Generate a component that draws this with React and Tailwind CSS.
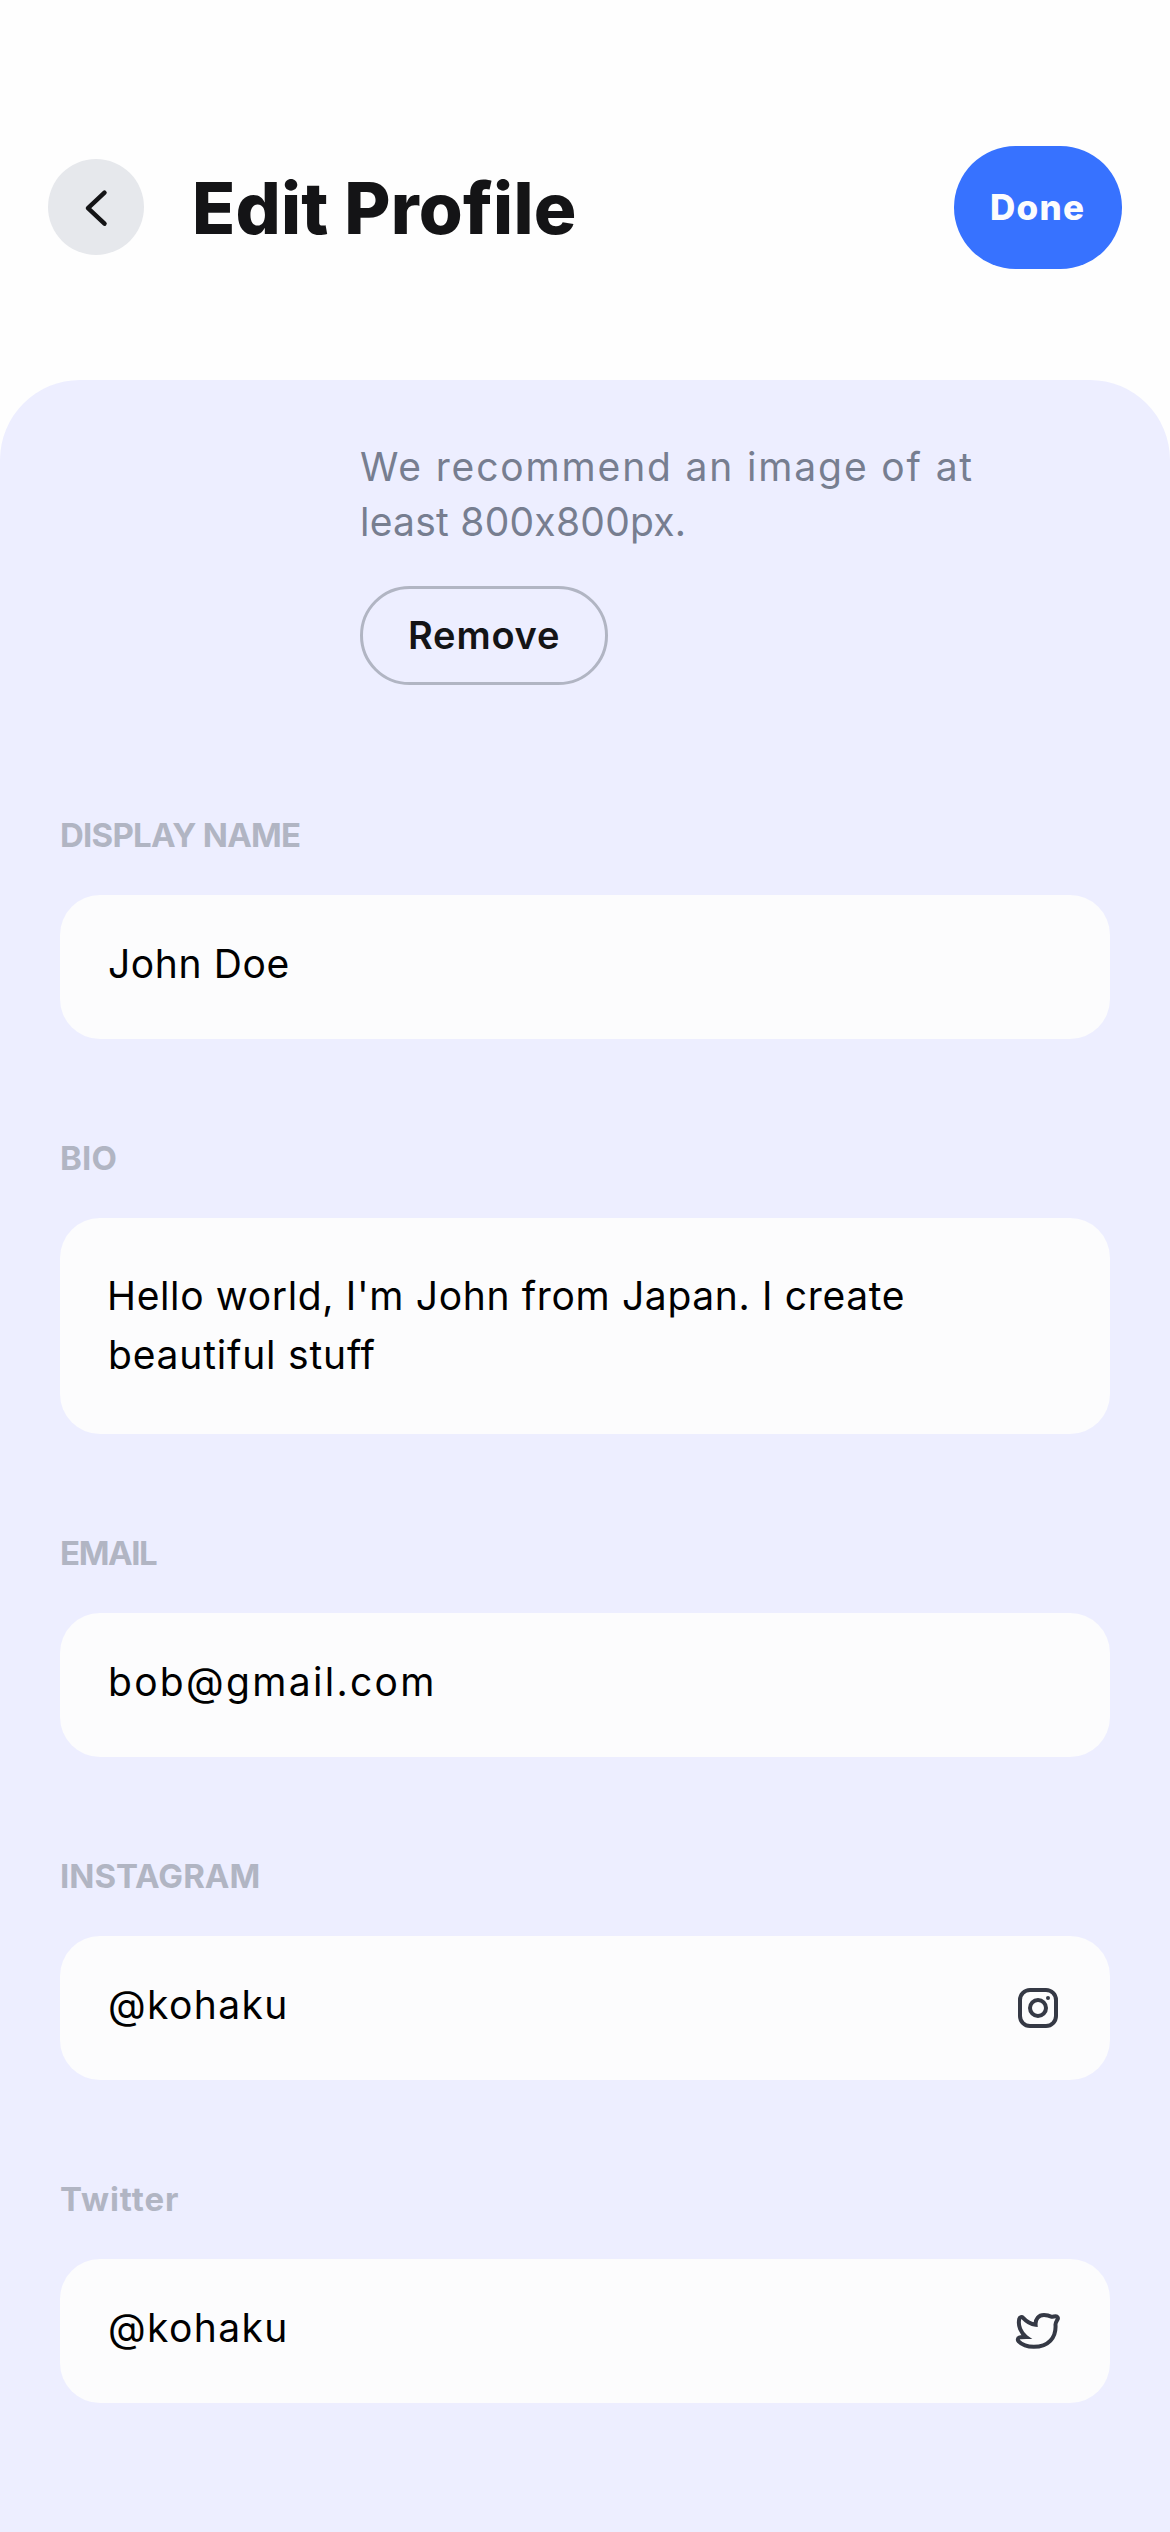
function InstagramIcon() {
  return (
    <svg className="size-12 shrink-0" viewBox="0 0 48 48" fill="none">
      <rect x="6" y="6" width="36" height="36" rx="10" stroke="#353945" strokeWidth="4" />
      <circle cx="24" cy="24" r="8" stroke="#353945" strokeWidth="4" />
      <circle cx="34" cy="14" r="2" fill="#353945" />
    </svg>
  );
}

function TwitterIcon() {
  return (
    <svg className="size-12 shrink-0" viewBox="0 0 48 48" fill="none">
      <path
        d="M21.6 17.8C21.2 12 24.6 8 30 8C33 8 35.2 8.6 37.5 9.8C38.9 9.9 40.3 9.3 41.8 9.3C43.4 9.3 44.4 10.8 43.6 12.3C42.7 14 41.3 15.6 41.5 17.8C42.3 30.5 34.5 39.8 19.8 39.8C13 39.8 8 37.9 4.6 34.4C3 32.7 4.2 30.3 6.3 30.2C8.2 30.1 10 30 12.2 30C7 26.2 3.6 18.8 5.3 11.8C5.8 10 7.8 9.5 9.1 10.9C12.3 14.4 16.4 17.2 21.6 17.8Z"
        stroke="#353945"
        strokeWidth="4"
      />
    </svg>
  );
}

function Field({ label, labelClass, children }) {
  return (
    <div className="flex flex-col gap-9">
      <label className={`text-[33px] leading-[48px] font-bold text-[#b1b5c3] ${labelClass}`}>{label}</label>
      {children}
    </div>
  );
}

function Input({ value, className, icon }) {
  return (
    <div className="flex h-36 items-center justify-between rounded-[40px] bg-[#fcfcfd] px-12">
      <span className={`pb-1.5 text-[39px] leading-[58px] text-black ${className}`}>{value}</span>
      {icon}
    </div>
  );
}

export default function App() {
  return (
    <div className="flex h-[2532px] w-[1170px] flex-col overflow-hidden bg-[#fefefe] font-['Inter',sans-serif] whitespace-nowrap [font-feature-settings:'calt'_0]">
      <header className="flex h-[380px] shrink-0 items-start px-12 pt-[146px]">
        <div className="flex h-[123px] w-full items-center">
          <button className="mb-px flex size-24 items-center justify-center rounded-full bg-[#e6e8ec]">
            <svg className="size-12" viewBox="0 0 48 48" fill="none">
              <path d="M32.5 9.7L16 25.1L32.5 40.6" stroke="#141416" strokeWidth="4.5" strokeLinecap="round" strokeLinejoin="round" />
            </svg>
          </button>
          <h1 className="ml-12 text-[71px] leading-[96px] font-extrabold tracking-[0.2px] text-[#141416]">Edit Profile</h1>
          <button className="ml-auto flex h-[123px] w-[168px] items-center rounded-full bg-[#3772ff] pl-9 text-[35px] font-extrabold tracking-[1.3px] text-[#fcfcfd]">
            Done
          </button>
        </div>
      </header>

      <main className="flex-1 rounded-t-[80px] bg-[#edeeff] px-[60px] pt-[59px]">
        <section className="ml-[300px]">
          <p className="text-[39px] leading-[55px] text-[#777e90]">
            <span className="block tracking-[1.85px]">We recommend an image of at</span>
            <span className="block tracking-[0.25px]">least 800x800px.</span>
          </p>
          <button className="mt-[37px] flex h-[99px] w-[248px] items-center rounded-full border-[3px] border-[#b1b5c3] pl-[45px] text-[38px] font-semibold tracking-[0.8px] text-[#141416]">
            Remove
          </button>
        </section>

        <form className="mt-[126px] flex flex-col gap-[95px]">
          <Field label="DISPLAY NAME" labelClass="tracking-[-0.75px]">
            <Input value="John Doe" className="tracking-[0.6px]" />
          </Field>
          <Field label="BIO" labelClass="tracking-[0.2px]">
            <div className="h-[216px] rounded-[40px] bg-[#fcfcfd] px-12 pt-12 text-[39px] leading-[59px] text-black">
              <span className="-ml-px block tracking-[0.65px]">Hello world, I'm John from Japan. I create</span>
              <span className="block tracking-[0.8px]">beautiful stuff</span>
            </div>
          </Field>
          <Field label="EMAIL" labelClass="tracking-[-1.4px]">
            <Input value="bob@gmail.com" className="tracking-[2.3px]" />
          </Field>
          <Field label="INSTAGRAM" labelClass="tracking-[0px]">
            <Input value="@kohaku" className="tracking-[1.4px]" icon={<InstagramIcon />} />
          </Field>
          <Field label="Twitter" labelClass="tracking-[0.95px]">
            <Input value="@kohaku" className="tracking-[1.4px]" icon={<TwitterIcon />} />
          </Field>
        </form>
      </main>
    </div>
  );
}
